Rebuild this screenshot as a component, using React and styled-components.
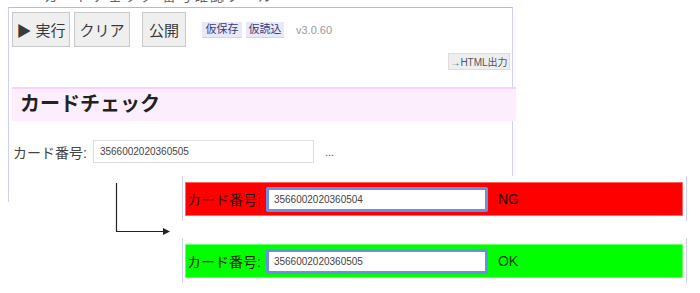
import React from 'react';
import styled, { createGlobalStyle } from 'styled-components';

const Global = createGlobalStyle`
  html, body { margin: 0; padding: 0; background: #fff; }
  body {
    font-family: "Liberation Sans", "Noto Sans CJK JP", sans-serif;
    color: #333;
    width: 700px;
    height: 293px;
    overflow: hidden;
  }
`;

const Page = styled.div`
  width: 700px;
`;

const Clipped = styled.div`
  height: 7px;
  overflow: hidden;
  padding-left: 44px;
  font-size: 14px;
  line-height: 16px;
  color: #666;
  span { display: block; margin-top: -12px; letter-spacing: 2px; }
`;

const Panel = styled.div`
  box-sizing: border-box;
  margin-left: 8px;
  width: 505px;
  height: 195px;
  border-left: 1px solid #cfcfff;
  border-right: 1px solid #cfcfff;
  border-top: 1px solid #bbb;
  padding: 4px 0 0 3px;
`;

const Toolbar = styled.div`
  display: flex;
  align-items: center;
`;

const BigButton = styled.button`
  box-sizing: border-box;
  height: 35px;
  width: ${p => p.$w}px;
  margin-left: ${p => p.$ml || 0}px;
  background: #efefef;
  border: 1px solid #c9c9c9;
  border-radius: 0;
  font-family: inherit;
  font-size: 15px;
  color: #3a3a3a;
  padding: 0;
`;

const SmallButton = styled.button`
  box-sizing: border-box;
  height: 16px;
  width: ${p => p.$w}px;
  margin-left: ${p => p.$ml || 0}px;
  background: #e8e8f7;
  border: none;
  border-bottom: 1px solid #d5d5ea;
  font-family: inherit;
  font-size: 11px;
  color: #3a3a7a;
  padding: 0;
  line-height: 15px;
`;

const Version = styled.span`
  margin-left: 12px;
  font-size: 11px;
  color: #999;
`;

const OutRow = styled.div`
  display: flex;
  justify-content: flex-end;
  padding-right: 2px;
  margin-top: 6px;
`;

const OutButton = styled.button`
  box-sizing: border-box;
  height: 17px;
  width: 62px;
  background: #eee;
  border: 1px solid #ddd;
  font-family: inherit;
  font-size: 10px;
  color: #556;
  padding: 0;
`;

const Heading = styled.h2`
  box-sizing: border-box;
  margin: 17px -4px 0 0;
  height: 34px;
  background: #fdeefd;
  border-top: 2px solid #f9d2f9;
  padding-left: 8px;
  font-size: 20px;
  font-weight: bold;
  line-height: 31px;
  color: #222;
`;

const FieldRow = styled.div`
  display: flex;
  align-items: center;
  margin-top: 19px;
  padding-left: 1px;
`;

const Label = styled.span`
  font-size: 14px;
  color: ${p => p.$dark ? '#2a1a1a' : '#444'};
  white-space: nowrap;
`;

const Field = styled.input`
  box-sizing: border-box;
  width: 221px;
  height: 23px;
  margin-left: 6px;
  border: 1px solid #ddd;
  padding: 0 6px;
  font-family: inherit;
  font-size: 10px;
  color: #444;
  outline: none;
`;

const Dots = styled.span`
  margin-left: 11px;
  font-size: 11px;
  color: #555;
`;

const Lower = styled.div`
  display: flex;
  margin-top: -26px;
  position: relative;
`;

const ArrowBox = styled.div`
  width: 182px;
  flex: none;
  svg { display: block; margin: 7px 0 0 0; }
`;

const Strips = styled.div`
  display: flex;
  flex-direction: column;
  gap: 17px;
`;

const Frame = styled.div`
  box-sizing: border-box;
  width: 505px;
  height: 45px;
  background: #fff;
  border-left: 1px solid #cfcfff;
  border-right: 1px solid #cfcfff;
  padding: 6px 3px 0 2px;
`;

const Strip = styled.div`
  box-sizing: border-box;
  height: 34px;
  display: flex;
  align-items: center;
  background: ${p => p.$ok ? '#00ff00' : '#ff0000'};
  border: 1px solid ${p => p.$ok ? '#66ff66' : '#ff6666'};
  padding-left: 1px;
`;

const StripField = styled.input`
  box-sizing: border-box;
  width: 222px;
  height: 25px;
  margin-left: 5px;
  border: 3px solid #6b8fe3;
  border-radius: 2px;
  background: #fff;
  padding: 0 5px;
  font-family: inherit;
  font-size: 10px;
  color: #444;
  outline: none;
`;

const Result = styled.span`
  margin-left: 10px;
  font-size: 14px;
  color: ${p => p.$ok ? '#114411' : '#330000'};
`;

const results = [
  { value: '3566002020360504', ok: false },
  { value: '3566002020360505', ok: true },
];

export default function App() {
  return (
    <Page>
      <Global />
      <Clipped><span>カードチェック 番号確認ツール</span></Clipped>
      <Panel>
        <Toolbar>
          <BigButton $w={58}>▶ 実行</BigButton>
          <BigButton $w={56} $ml={4}>クリア</BigButton>
          <BigButton $w={44} $ml={12}>公開</BigButton>
          <SmallButton $w={40} $ml={16}>仮保存</SmallButton>
          <SmallButton $w={38} $ml={4}>仮読込</SmallButton>
          <Version>v3.0.60</Version>
        </Toolbar>
        <OutRow>
          <OutButton>→HTML出力</OutButton>
        </OutRow>
        <Heading>カードチェック</Heading>
        <FieldRow>
          <Label>カード番号:</Label>
          <Field readOnly value="3566002020360505" />
          <Dots>...</Dots>
        </FieldRow>
      </Panel>
      <Lower>
        <ArrowBox>
          <svg width="182" height="60" viewBox="0 0 182 60">
            <path d="M116.5 0 V48.5 H164" stroke="#222" strokeWidth="1.2" fill="none" />
            <path d="M163 45 L170 48.5 L163 52 Z" fill="#222" />
          </svg>
        </ArrowBox>
        <Strips>
          {results.map(r => (
            <Frame key={r.value}>
              <Strip $ok={r.ok}>
                <Label $dark>カード番号:</Label>
                <StripField readOnly value={r.value} />
                <Result $ok={r.ok}>{r.ok ? 'OK' : 'NG'}</Result>
              </Strip>
            </Frame>
          ))}
        </Strips>
      </Lower>
    </Page>
  );
}
